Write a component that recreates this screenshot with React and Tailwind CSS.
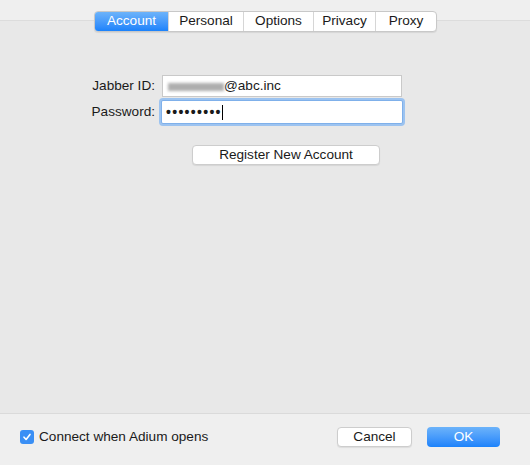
export default function App() {
  const font = { fontFamily: '"Liberation Sans", Arial, sans-serif' };
  return (
    <div className="w-[530px] h-[465px] bg-[#e8e8e8] flex flex-col text-[13.6px] text-[#1a1a1a] overflow-hidden" style={font}>
      <div className="relative h-[413px] flex flex-col">
        <div className="h-[21px] bg-[#efefef] border-b border-[#dcdcdc]"></div>
        <div className="absolute left-[94px] top-[11px] flex h-[21px] rounded-[4px] border border-[#c8c8c8] bg-white shadow-[0_1px_1px_rgba(0,0,0,0.08)] overflow-hidden">
          <div className="w-[73px] flex items-center justify-center bg-gradient-to-b from-[#6cb3fa] to-[#1a82fb] text-white">Account</div>
          <div className="w-[75px] flex items-center justify-center border-l border-[#d6d6d6]">Personal</div>
          <div className="w-[70px] flex items-center justify-center border-l border-[#d6d6d6]">Options</div>
          <div className="w-[62px] flex items-center justify-center border-l border-[#d6d6d6]">Privacy</div>
          <div className="w-[61px] flex items-center justify-center border-l border-[#d6d6d6]">Proxy</div>
        </div>
        <div className="pt-[54px] flex flex-col">
          <div className="flex items-center h-[22px]">
            <div className="w-[156px] text-right pr-[1px] pt-[1px]">Jabber ID:</div>
            <div className="ml-[6px] w-[240px] h-[22px] bg-white border border-[#c9c9c9] flex items-center pl-[5px] pt-[1px]">
              <span className="inline-block w-[56px] h-[8px] bg-[#9a9a9a] blur-[1.5px] opacity-80"></span>
              <span>@abc.inc</span>
            </div>
          </div>
          <div className="flex items-center h-[24px] mt-[3px]">
            <div className="w-[156px] text-right pr-[1px]">Password:</div>
            <div className="ml-[5px] w-[242px] h-[24px] bg-white border border-[#7fb0ea] ring-[2px] ring-[#9cc3f0] rounded-[2px] flex items-center pl-[4px]">
              <span className="tracking-[1.3px] text-[14px] font-bold leading-none">•••••••••</span>
              <span className="inline-block w-[1px] h-[15px] bg-black"></span>
            </div>
          </div>
          <div className="flex mt-[21px] ml-[192px]">
            <div className="w-[188px] h-[20px] bg-white border border-[#cdcdcd] rounded-[4px] shadow-[0_1px_1px_rgba(0,0,0,0.08)] flex items-center justify-center">Register New Account</div>
          </div>
        </div>
      </div>
      <div className="flex-1 bg-[#efefef] border-t border-[#dadada] flex items-center pl-[20px] pr-[30px] pb-[5px]">
        <div className="w-[14px] h-[14px] rounded-[3px] bg-[#3a8ff5] flex items-center justify-center">
          <svg width="10" height="10" viewBox="0 0 10 10"><path d="M2 5.2 L4.1 7.5 L8 2.4" stroke="white" strokeWidth="1.6" fill="none" strokeLinecap="round" strokeLinejoin="round"/></svg>
        </div>
        <span className="ml-[5px]">Connect when Adium opens</span>
        <div className="ml-auto w-[75px] h-[20px] bg-white border border-[#cdcdcd] rounded-[4px] shadow-[0_1px_1px_rgba(0,0,0,0.08)] flex items-center justify-center">Cancel</div>
        <div className="ml-[15px] w-[73px] h-[20px] rounded-[4px] bg-gradient-to-b from-[#6cb3fa] to-[#1a82fb] text-white flex items-center justify-center">OK</div>
      </div>
    </div>
  );
}
